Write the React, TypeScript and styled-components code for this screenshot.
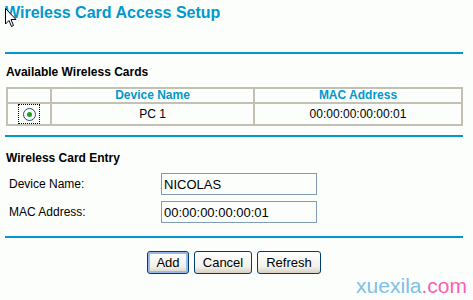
import React from 'react';
import styled, { createGlobalStyle } from 'styled-components';

const GlobalStyle = createGlobalStyle`
  html, body {
    margin: 0;
    padding: 0;
    background: #fcfefc;
  }
  body {
    font-family: 'Liberation Sans', Arial, sans-serif;
    font-size: 12px;
    color: #000;
  }
`;

const Page = styled.div`
  position: relative;
  width: 473px;
  height: 300px;
  overflow: hidden;
  padding: 0 10px 0 5px;
  box-sizing: border-box;
`;

const Title = styled.h1`
  margin: 0;
  padding-top: 4px;
  height: 48px;
  font-size: 16px;
  line-height: 18px;
  font-weight: bold;
  color: #0099cc;
`;

const Rule = styled.div`
  height: 2px;
  width: 458px;
  background: #0099cc;
`;

const SectionHead = styled.h2<{ $pad?: string }>`
  margin: 0;
  font-size: 12px;
  font-weight: bold;
  line-height: 14px;
  padding: ${props => props.$pad || '11px 0 8px 1px'};
`;

const Table = styled.table`
  width: 457px;
  margin-left: 1px;
  border-collapse: collapse;
  border: 2px solid #c4c0b4;
  margin-bottom: 9px;
`;

const Cell = styled.td<{ $w?: number; $head?: boolean }>`
  border: 2px solid #c4c0b4;
  height: ${props => (props.$head ? 13 : 19)}px;
  padding: 0;
  text-align: center;
  width: ${props => (props.$w ? `${props.$w}px` : 'auto')};
  font-weight: ${props => (props.$head ? 'bold' : 'normal')};
  color: ${props => (props.$head ? '#0099cc' : '#000')};
  line-height: 13px;
`;

const RadioWrap = styled.span`
  display: inline-flex;
  align-items: center;
  justify-content: center;
  width: 20px;
  height: 18px;
  border: 1px dotted #000;
  vertical-align: middle;
`;

const Radio = styled.span`
  width: 11px;
  height: 11px;
  border-radius: 50%;
  border: 1px solid #1c5180;
  background: #fff;
  display: flex;
  align-items: center;
  justify-content: center;

  &::after {
    content: '';
    width: 5px;
    height: 5px;
    border-radius: 50%;
    background: #21a121;
  }
`;

const FormRow = styled.div<{ $last?: boolean }>`
  display: flex;
  align-items: center;
  height: 22px;
  margin-bottom: ${props => (props.$last ? 13 : 6)}px;
`;

const Label = styled.label`
  width: 156px;
  padding-left: 4px;
  box-sizing: border-box;
`;

const Input = styled.input`
  width: 156px;
  height: 22px;
  box-sizing: border-box;
  border: 1px solid #7f9db9;
  background: #fcfefc;
  padding: 0 2px;
  font-family: 'Liberation Sans', Arial, sans-serif;
  font-size: 13px;
  color: #000;
  outline: none;
`;

const Buttons = styled.div`
  display: flex;
  justify-content: center;
  gap: 5px;
  padding-top: 13px;
  width: 458px;
`;

const Button = styled.button<{ $w: number; $focus?: boolean }>`
  width: ${props => props.$w}px;
  height: 23px;
  border: 1px solid #003c74;
  border-radius: 3px;
  background: linear-gradient(#ffffff, #f2f1ea 70%, #d6d0c5);
  font-family: 'Liberation Sans', Arial, sans-serif;
  font-size: 13px;
  color: #000;
  padding: 0;
  box-shadow: ${props => (props.$focus ? 'inset 0 0 0 2px #98b8ea' : 'none')};
`;

const Watermark = styled.div`
  position: absolute;
  right: 6px;
  bottom: 2px;
  font-family: 'Liberation Sans', Arial, sans-serif;
  font-size: 21px;
  line-height: 24px;
  color: #7fc0e6;
`;

const Pink = styled.span`
  color: #ff5fae;
`;

const Cursor = styled.svg`
  position: absolute;
  left: 5px;
  top: 8px;
`;

const App: React.FC = () => {
  return (
    <>
      <GlobalStyle />
      <Page>
        <Title>Wireless Card Access Setup</Title>
        <Rule />
        <SectionHead>Available Wireless Cards</SectionHead>
        <Table>
          <tbody>
            <tr>
              <Cell $w={42} $head />
              <Cell $w={201} $head>Device Name</Cell>
              <Cell $head>MAC Address</Cell>
            </tr>
            <tr>
              <Cell>
                <RadioWrap>
                  <Radio />
                </RadioWrap>
              </Cell>
              <Cell>PC 1</Cell>
              <Cell>00:00:00:00:00:01</Cell>
            </tr>
          </tbody>
        </Table>
        <Rule />
        <SectionHead $pad="14px 0 8px 1px">Wireless Card Entry</SectionHead>
        <FormRow>
          <Label>Device Name:</Label>
          <Input defaultValue="NICOLAS" />
        </FormRow>
        <FormRow $last>
          <Label>MAC Address:</Label>
          <Input defaultValue="00:00:00:00:00:01" />
        </FormRow>
        <Rule />
        <Buttons>
          <Button $w={42} $focus>Add</Button>
          <Button $w={58}>Cancel</Button>
          <Button $w={64}>Refresh</Button>
        </Buttons>
        <Watermark>
          xuexila<Pink>.com</Pink>
        </Watermark>
        <Cursor width="12" height="20" viewBox="0 0 12 20">
          <path d="M0.5 0.5 L0.5 16 L4 12.5 L6.5 18.5 L8.5 17.5 L6 11.5 L11 11.5 Z" fill="#fff" stroke="#000" strokeWidth="1" />
        </Cursor>
      </Page>
    </>
  );
};

export default App;
